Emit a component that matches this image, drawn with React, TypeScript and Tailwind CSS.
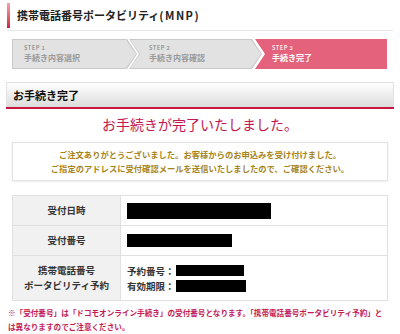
import React from "react";

const arrow =
  "[clip-path:polygon(0_0,calc(100%-10px)_0,100%_50%,calc(100%-10px)_100%,0_100%)]";
const notched =
  "[clip-path:polygon(0_0,calc(100%-10px)_0,100%_50%,calc(100%-10px)_100%,0_100%,10px_50%)]";
const notchedEnd = "[clip-path:polygon(0_0,100%_0,100%_100%,0_100%,10px_50%)]";

export default function App() {
  return (
    <div
      className="w-[400px] h-[334px] bg-white overflow-hidden text-black"
      style={{ fontFamily: '"Noto Sans CJK JP", "Noto Sans", sans-serif' }}
    >
      {/* Header */}
      <div className="mx-[7px] flex items-start border-b border-[#e6e6e6] h-[31px]">
        <div className="mt-[3px] w-[3px] h-[25px] bg-gradient-to-b from-[#f5a0b0] to-[#d0193f]" />
        <div className="ml-[7px] mt-[6px] text-[11px] leading-[18px] font-bold text-[#222]">
          携帯電話番号ポータビリティ<span className="tracking-[1.5px]">(MNP)</span>
        </div>
      </div>

      {/* Steps */}
      <div className="mt-[8px] ml-[12px] flex h-[30px]">
        <div className={`relative z-10 w-[125px] h-full bg-[#c9c9c9] ${arrow}`}>
          <div className={`absolute inset-[1px] bg-[#e2e2e2] ${arrow} pl-[11px] pt-[4px]`}>
            <div className="text-[5.5px] leading-[8px] text-[#9a9a9a] font-bold tracking-[0.5px]">STEP 1</div>
            <div className="text-[8px] leading-[11px] text-[#9a9a9a] font-bold">手続き内容選択</div>
          </div>
        </div>
        <div className={`relative z-10 ml-[-8px] w-[133px] h-full bg-[#c9c9c9] ${notched}`}>
          <div className={`absolute inset-[1px] bg-[#e2e2e2] ${notched} pl-[19px] pt-[4px]`}>
            <div className="text-[5.5px] leading-[8px] text-[#9a9a9a] font-bold tracking-[0.5px]">STEP 2</div>
            <div className="text-[8px] leading-[11px] text-[#9a9a9a] font-bold">手続き内容確認</div>
          </div>
        </div>
        <div className={`ml-[-7px] w-[132px] h-full bg-[#e4627b] ${notchedEnd} pl-[17px] pt-[5px]`}>
          <div className="text-[5.5px] leading-[8px] text-[#fbe3e8] font-bold tracking-[0.5px]">STEP 3</div>
          <div className="text-[8px] leading-[11px] text-white font-bold">手続き完了</div>
        </div>
      </div>

      {/* Section heading */}
      <div className="mt-[13px] mx-[6px] h-[25px] border border-[#e2e2e2] border-b-0 bg-gradient-to-b from-white to-[#dcdcdc] flex items-center pl-[6px]">
        <span className="text-[11px] font-bold text-[#111]">お手続き完了</span>
      </div>
      <div className="mx-[6px] h-[2px] bg-[#c8173f]" />

      {/* Complete message */}
      <div className="mt-[5px] text-center text-[14px] leading-[20px] text-[#c4174f]">
        お手続きが完了いたしました。
      </div>

      <div className="mt-[8px] mx-[12px] border border-[#e3e3e3] shadow-[0_1px_2px_rgba(0,0,0,0.08)] py-[5px] text-center text-[8.3px] leading-[13.5px] text-[#a68419] font-bold">
        <div>ご注文ありがとうございました。お客様からのお申込みを受け付けました。</div>
        <div>ご指定のアドレスに受付確認メールを送信いたしましたので、ご確認ください。</div>
      </div>

      {/* Table */}
      <div className="mt-[14px] mx-[12px] border border-[#e0e0e0] text-[9.5px] font-bold text-[#333]">
        <div className="flex h-[30px] border-b border-[#e0e0e0]">
          <div className="w-[108px] bg-[#f1f1f1] border-r border-[#e0e0e0] flex items-center justify-center">受付日時</div>
          <div className="flex-1 flex items-center pl-[6px]">
            <div className="w-[144px] h-[16px] bg-black" />
          </div>
        </div>
        <div className="flex h-[30px] border-b border-[#e0e0e0]">
          <div className="w-[108px] bg-[#f1f1f1] border-r border-[#e0e0e0] flex items-center justify-center">受付番号</div>
          <div className="flex-1 flex items-center pl-[6px]">
            <div className="w-[105px] h-[13px] bg-black" />
          </div>
        </div>
        <div className="flex h-[44px]">
          <div className="w-[108px] bg-[#f1f1f1] border-r border-[#e0e0e0] flex flex-col items-center justify-center leading-[15px]">
            <div>携帯電話番号</div>
            <div>ポータビリティ予約</div>
          </div>
          <div className="flex-1 flex flex-col justify-center pl-[6px] leading-[14px] gap-[1px]">
            <div className="flex items-center">
              <span className="w-[49px]">予約番号：</span>
              <div className="w-[68px] h-[11px] bg-black" />
            </div>
            <div className="flex items-center">
              <span className="w-[49px]">有効期限：</span>
              <div className="w-[70px] h-[12px] bg-black" />
            </div>
          </div>
        </div>
      </div>

      {/* Notes */}
      <div className="mt-[5px] ml-[8px] text-[7.6px] leading-[13.5px] font-bold text-[#c41a55] whitespace-nowrap">
        <div>※「受付番号」は「ドコモオンライン手続き」の受付番号となります。「携帯電話番号ポータビリティ予約」と</div>
        <div>は異なりますのでご注意ください。</div>
      </div>
    </div>
  );
}
